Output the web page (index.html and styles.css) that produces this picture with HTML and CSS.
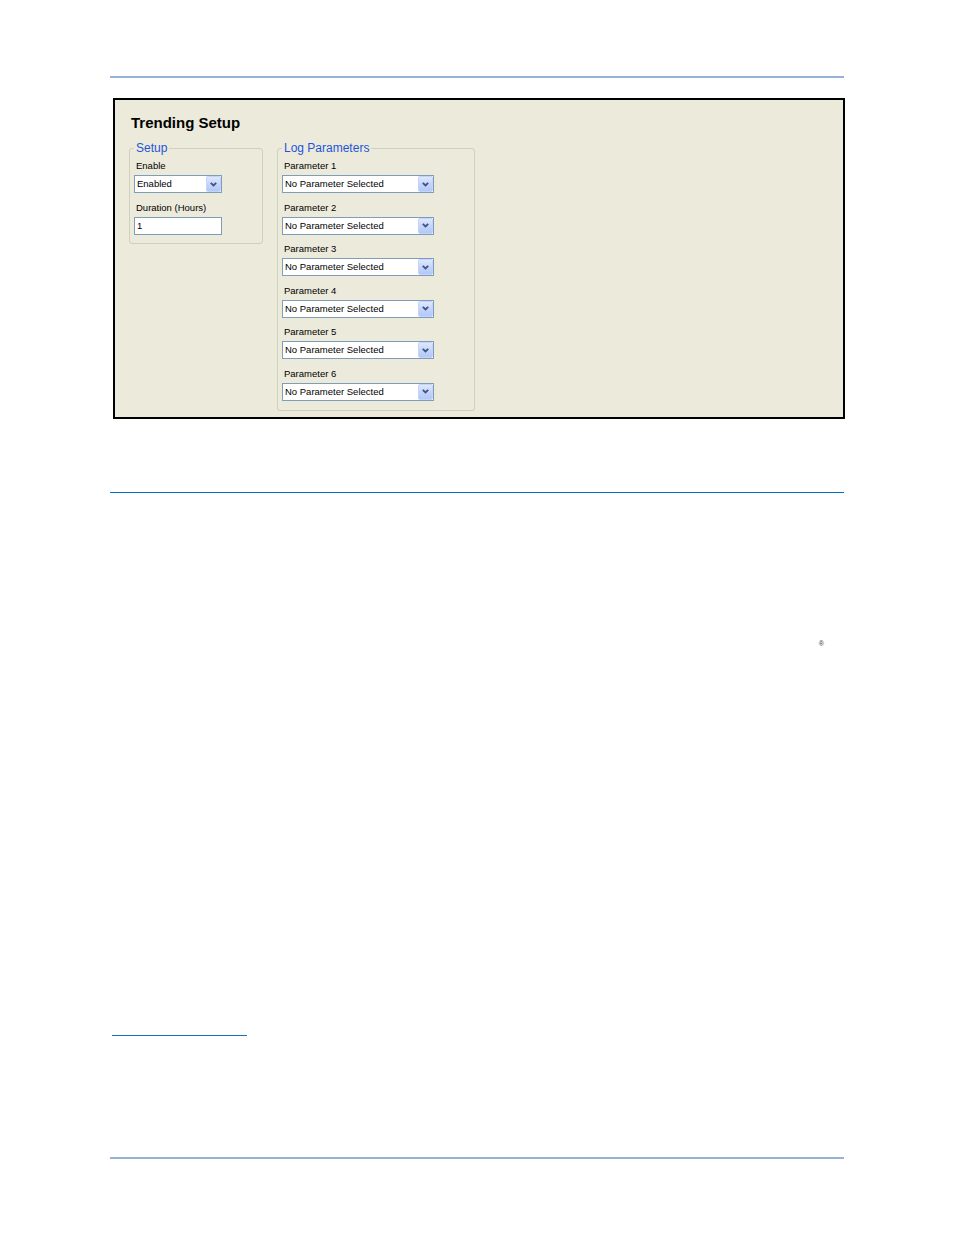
FILE: index.html
```html
<!DOCTYPE html>
<html>
<head>
<meta charset="utf-8">
<title>Trending Setup</title>
<link rel="stylesheet" href="styles.css">
</head>
<body>
<div class="page">
  <div class="rule-top"></div>

  <div class="panel">
    <div class="panel-title">Trending Setup</div>
    <div class="groups">
      <fieldset class="group group-setup">
        <legend>Setup</legend>
        <div class="field">
          <div class="label">Enable</div>
          <div class="combo"><span class="combo-text">Enabled</span><span class="combo-btn"><svg width="7" height="5" viewBox="0 0 7 5"><polyline points="0.8,0.8 3.5,3.5 6.2,0.8" fill="none" stroke="#3f5480" stroke-width="1.8"/></svg></span></div>
        </div>
        <div class="field">
          <div class="label">Duration (Hours)</div>
          <div class="textbox">1</div>
        </div>
      </fieldset>

      <fieldset class="group group-log">
        <legend>Log Parameters</legend>
        <div class="field">
          <div class="label">Parameter 1</div>
          <div class="combo"><span class="combo-text">No Parameter Selected</span><span class="combo-btn"><svg width="7" height="5" viewBox="0 0 7 5"><polyline points="0.8,0.8 3.5,3.5 6.2,0.8" fill="none" stroke="#3f5480" stroke-width="1.8"/></svg></span></div>
        </div>
        <div class="field">
          <div class="label">Parameter 2</div>
          <div class="combo"><span class="combo-text">No Parameter Selected</span><span class="combo-btn"><svg width="7" height="5" viewBox="0 0 7 5"><polyline points="0.8,0.8 3.5,3.5 6.2,0.8" fill="none" stroke="#3f5480" stroke-width="1.8"/></svg></span></div>
        </div>
        <div class="field">
          <div class="label">Parameter 3</div>
          <div class="combo"><span class="combo-text">No Parameter Selected</span><span class="combo-btn"><svg width="7" height="5" viewBox="0 0 7 5"><polyline points="0.8,0.8 3.5,3.5 6.2,0.8" fill="none" stroke="#3f5480" stroke-width="1.8"/></svg></span></div>
        </div>
        <div class="field">
          <div class="label">Parameter 4</div>
          <div class="combo"><span class="combo-text">No Parameter Selected</span><span class="combo-btn"><svg width="7" height="5" viewBox="0 0 7 5"><polyline points="0.8,0.8 3.5,3.5 6.2,0.8" fill="none" stroke="#3f5480" stroke-width="1.8"/></svg></span></div>
        </div>
        <div class="field">
          <div class="label">Parameter 5</div>
          <div class="combo"><span class="combo-text">No Parameter Selected</span><span class="combo-btn"><svg width="7" height="5" viewBox="0 0 7 5"><polyline points="0.8,0.8 3.5,3.5 6.2,0.8" fill="none" stroke="#3f5480" stroke-width="1.8"/></svg></span></div>
        </div>
        <div class="field">
          <div class="label">Parameter 6</div>
          <div class="combo"><span class="combo-text">No Parameter Selected</span><span class="combo-btn"><svg width="7" height="5" viewBox="0 0 7 5"><polyline points="0.8,0.8 3.5,3.5 6.2,0.8" fill="none" stroke="#3f5480" stroke-width="1.8"/></svg></span></div>
        </div>
      </fieldset>
    </div>
  </div>

  <div class="rule-section"></div>

  <div class="reg-mark">®</div>

  <div class="rule-footnote"></div>

  <div class="rule-bottom"></div>
</div>
</body>
</html>
```

FILE: styles.css
```css
html, body {
  margin: 0;
  padding: 0;
  background: #ffffff;
}

body {
  font-family: "Liberation Sans", Arial, sans-serif;
  color: #000;
}

.page {
  width: 734px;
  margin-left: 110px;
  padding-top: 76px;
  padding-bottom: 40px;
}

.rule-top {
  height: 2px;
  background: #95b3d7;
}

.panel {
  margin-top: 20px;
  margin-left: 3px;
  width: 714px;
  border: 2px solid #000;
  background: #eceadb;
  padding: 14px 0 6px 14px;
  box-sizing: content-box;
}

.panel-title {
  font-weight: bold;
  font-size: 15px;
  line-height: 18px;
  margin-left: 2px;
}

.groups {
  display: flex;
  align-items: flex-start;
  gap: 14px;
  margin-top: 9px;
}

.group {
  margin: 0;
  border: 1px solid #d0d0bf;
  border-radius: 3px;
  padding: 0 4px 8px 4px;
  box-sizing: border-box;
  min-width: 0;
}

.group legend {
  padding: 0 2px;
  font-size: 12px;
  line-height: 14px;
  color: #1f55d8;
}

.group-setup {
  width: 134px;
}

.group-log {
  width: 198px;
  padding-bottom: 9px;
}

.field {
  margin-top: 9.6px;
}

.field:first-of-type {
  margin-top: 6px;
}

.label {
  font-size: 9.5px;
  line-height: 10px;
  height: 12px;
  padding-left: 2px;
  white-space: nowrap;
}

.combo,
.textbox {
  margin-top: 2px;
  height: 18px;
  border: 1px solid #7f9db9;
  background: #fff;
  box-sizing: border-box;
  display: flex;
  align-items: center;
  font-size: 9.5px;
  line-height: 16px;
  white-space: nowrap;
}

.group-setup .combo,
.group-setup .textbox {
  width: 88px;
}

.group-log .combo {
  width: 152px;
}

.combo-text,
.textbox {
  padding-left: 2px;
}

.combo-text {
  flex: 1;
  overflow: hidden;
}

.combo-btn {
  width: 15px;
  height: 16px;
  box-sizing: border-box;
  border: 1px solid #c3d3fd;
  border-radius: 2px;
  background: linear-gradient(#dfe8fd, #c0d2fb 60%, #b4c9f7);
  display: flex;
  align-items: center;
  justify-content: center;
}

.combo-btn svg {
  display: block;
}

.rule-section {
  margin-top: 73px;
  height: 1px;
  background: #0070c0;
}

.reg-mark {
  margin-top: 147px;
  font-size: 7px;
  line-height: 8px;
  height: 8px;
  color: #333;
  text-align: right;
  padding-right: 20px;
}

.rule-footnote {
  margin-top: 387px;
  margin-left: 2px;
  width: 135px;
  height: 1px;
  background: #1f6db5;
}

.rule-bottom {
  margin-top: 121px;
  height: 2px;
  background: #95b3d7;
}
```
